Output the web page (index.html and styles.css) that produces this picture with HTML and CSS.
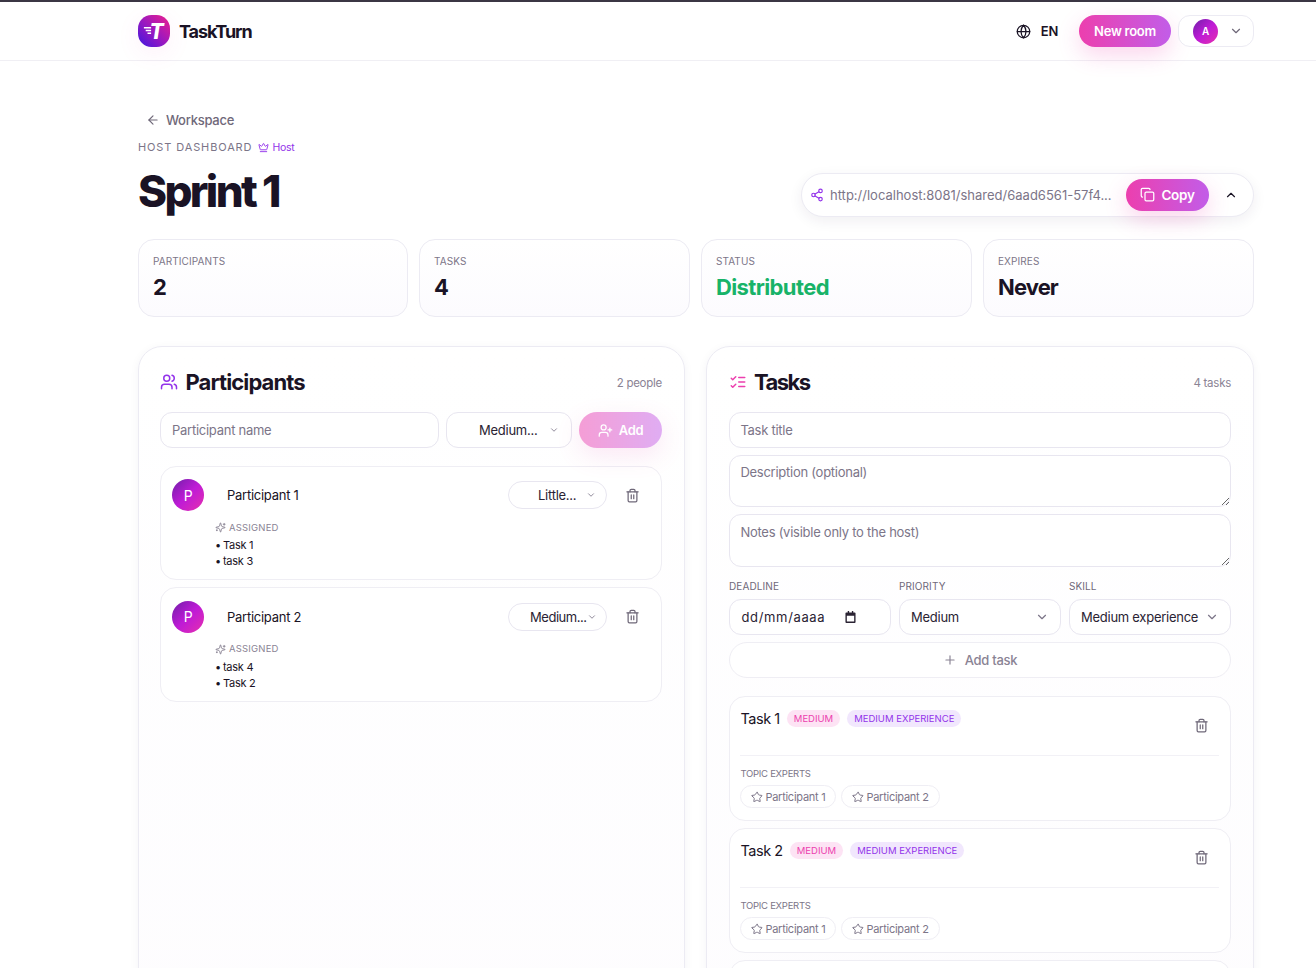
FILE: index.html
```html
<!DOCTYPE html>
<html lang="en">
<head>
    <meta charset="UTF-8">
    <meta name="viewport" content="width=device-width, initial-scale=1.0">
    <title>TaskTurn - Sprint 1</title>
    <link rel="stylesheet" href="styles.css">
</head>
<body>
    <!-- Icon sprite -->
    <svg class="sprite" xmlns="http://www.w3.org/2000/svg">
        <symbol id="i-globe" viewBox="0 0 24 24"><circle cx="12" cy="12" r="10"/><path d="M12 2a14.5 14.5 0 0 0 0 20 14.5 14.5 0 0 0 0-20"/><path d="M2 12h20"/></symbol>
        <symbol id="i-down" viewBox="0 0 24 24"><path d="m6 9 6 6 6-6"/></symbol>
        <symbol id="i-up" viewBox="0 0 24 24"><path d="m18 15-6-6-6 6"/></symbol>
        <symbol id="i-left" viewBox="0 0 24 24"><path d="m12 19-7-7 7-7"/><path d="M19 12H5"/></symbol>
        <symbol id="i-crown" viewBox="0 0 24 24"><path d="M11.562 3.266a.5.5 0 0 1 .876 0L15.39 8.87a1 1 0 0 0 1.516.294L21.183 5.5a.5.5 0 0 1 .798.519l-2.834 10.246a1 1 0 0 1-.956.734H5.81a1 1 0 0 1-.957-.734L2.02 6.02a.5.5 0 0 1 .798-.519l4.276 3.664a1 1 0 0 0 1.516-.294z"/><path d="M5 21h14"/></symbol>
        <symbol id="i-share" viewBox="0 0 24 24"><circle cx="18" cy="5" r="3"/><circle cx="6" cy="12" r="3"/><circle cx="18" cy="19" r="3"/><path d="m8.59 13.51 6.83 3.98"/><path d="m15.41 6.51-6.82 3.98"/></symbol>
        <symbol id="i-copy" viewBox="0 0 24 24"><rect x="8" y="8" width="14" height="14" rx="2"/><path d="M4 16c-1.1 0-2-.9-2-2V4c0-1.1.9-2 2-2h10c1.1 0 2 .9 2 2"/></symbol>
        <symbol id="i-users" viewBox="0 0 24 24"><path d="M16 21v-2a4 4 0 0 0-4-4H6a4 4 0 0 0-4 4v2"/><circle cx="9" cy="7" r="4"/><path d="M22 21v-2a4 4 0 0 0-3-3.87"/><path d="M16 3.13a4 4 0 0 1 0 7.75"/></symbol>
        <symbol id="i-user-plus" viewBox="0 0 24 24"><path d="M16 21v-2a4 4 0 0 0-4-4H6a4 4 0 0 0-4 4v2"/><circle cx="9" cy="7" r="4"/><path d="M19 8v6"/><path d="M22 11h-6"/></symbol>
        <symbol id="i-todo" viewBox="0 0 24 24"><path d="m3 17 2 2 4-4"/><path d="m3 7 2 2 4-4"/><path d="M13 6h8"/><path d="M13 12h8"/><path d="M13 18h8"/></symbol>
        <symbol id="i-trash" viewBox="0 0 24 24"><path d="M3 6h18"/><path d="M19 6v14c0 1-1 2-2 2H7c-1 0-2-1-2-2V6"/><path d="M8 6V4c0-1 1-2 2-2h4c1 0 2 1 2 2v2"/><path d="M10 11v6"/><path d="M14 11v6"/></symbol>
        <symbol id="i-sparkles" viewBox="0 0 24 24"><path d="M9.9 15.5a2 2 0 0 0-1.4-1.4l-6.1-1.6a.5.5 0 0 1 0-1l6.1-1.6a2 2 0 0 0 1.4-1.4l1.6-6.1a.5.5 0 0 1 1 0l1.6 6.1a2 2 0 0 0 1.4 1.4l6.1 1.6a.5.5 0 0 1 0 1l-6.1 1.6a2 2 0 0 0-1.4 1.4l-1.6 6.1a.5.5 0 0 1-1 0z"/><path d="M20 3v4"/><path d="M22 5h-4"/><path d="M4 17v2"/><path d="M5 18H3"/></symbol>
        <symbol id="i-star" viewBox="0 0 24 24"><path d="M11.5 2.3a.5.5 0 0 1 1 0l2.3 4.7a2 2 0 0 0 1.6 1.1l5.2.8a.5.5 0 0 1 .3.9l-3.8 3.7a2 2 0 0 0-.6 1.9l.9 5.2a.5.5 0 0 1-.8.6l-4.6-2.5a2 2 0 0 0-2 0l-4.6 2.5a.5.5 0 0 1-.8-.6l.9-5.2a2 2 0 0 0-.6-1.9L1.6 9.8a.5.5 0 0 1 .3-.9l5.2-.8a2 2 0 0 0 1.6-1.1z"/></symbol>
        <symbol id="i-plus" viewBox="0 0 24 24"><path d="M5 12h14"/><path d="M12 5v14"/></symbol>
    </svg>

    <!-- Header -->
    <header class="topbar">
        <div class="topbar-inner">
            <a class="brand" href="#">
                <span class="brand-mark">
                    <svg class="brand-lines" viewBox="0 0 10 10"><path d="M1 2h8M3 5h6M5 8h4"/></svg>
                    <span class="brand-t">T</span>
                </span>
                <span class="brand-name">TaskTurn</span>
            </a>
            <div class="topbar-actions">
                <button class="lang"><svg class="icon icon-15"><use href="#i-globe"/></svg>EN</button>
                <button class="btn-grad btn-new">New room</button>
                <button class="account">
                    <span class="avatar avatar-small">A</span>
                    <svg class="icon icon-14"><use href="#i-down"/></svg>
                </button>
            </div>
        </div>
    </header>

    <main class="page">
        <a class="back" href="#"><svg class="icon icon-14"><use href="#i-left"/></svg>Workspace</a>
        <div class="eyebrow">
            <span class="eyebrow-text">HOST DASHBOARD</span>
            <span class="host-tag"><svg class="icon icon-11"><use href="#i-crown"/></svg>Host</span>
        </div>

        <div class="title-row">
            <h1>Sprint 1</h1>
            <div class="share">
                <svg class="icon icon-14 share-icon"><use href="#i-share"/></svg>
                <span class="share-url">http://localhost:8081/shared/6aad6561-57f4...</span>
                <button class="btn-grad btn-copy"><svg class="icon icon-15"><use href="#i-copy"/></svg>Copy</button>
                <svg class="icon icon-14 share-toggle"><use href="#i-up"/></svg>
            </div>
        </div>

        <!-- Stats -->
        <section class="stats">
            <div class="stat"><p class="stat-label">PARTICIPANTS</p><p class="stat-value">2</p></div>
            <div class="stat"><p class="stat-label">TASKS</p><p class="stat-value">4</p></div>
            <div class="stat"><p class="stat-label">STATUS</p><p class="stat-value stat-green">Distributed</p></div>
            <div class="stat"><p class="stat-label">EXPIRES</p><p class="stat-value">Never</p></div>
        </section>

        <div class="columns">
            <!-- Participants -->
            <section class="panel panel-people">
                <div class="panel-head">
                    <h2><svg class="icon icon-18 purple"><use href="#i-users"/></svg>Participants</h2>
                    <span class="panel-count">2 people</span>
                </div>
                <div class="add-row">
                    <input class="field add-name" placeholder="Participant name">
                    <div class="field picker add-skill"><span>Medium...</span><svg class="icon icon-10"><use href="#i-down"/></svg></div>
                    <button class="btn-grad btn-add"><svg class="icon icon-15"><use href="#i-user-plus"/></svg>Add</button>
                </div>

                <div class="person">
                    <div class="person-top">
                        <span class="avatar">P</span>
                        <span class="person-name">Participant 1</span>
                        <div class="pill-select pill-little"><span>Little...</span><svg class="icon icon-10"><use href="#i-down"/></svg></div>
                        <svg class="icon icon-15 trash"><use href="#i-trash"/></svg>
                    </div>
                    <div class="assigned">
                        <p class="assigned-label"><svg class="icon icon-11"><use href="#i-sparkles"/></svg>ASSIGNED</p>
                        <ul>
                            <li>Task 1</li>
                            <li>task 3</li>
                        </ul>
                    </div>
                </div>

                <div class="person">
                    <div class="person-top">
                        <span class="avatar">P</span>
                        <span class="person-name">Participant 2</span>
                        <div class="pill-select pill-medium"><span>Medium...</span><svg class="icon icon-10"><use href="#i-down"/></svg></div>
                        <svg class="icon icon-15 trash"><use href="#i-trash"/></svg>
                    </div>
                    <div class="assigned">
                        <p class="assigned-label"><svg class="icon icon-11"><use href="#i-sparkles"/></svg>ASSIGNED</p>
                        <ul>
                            <li>task 4</li>
                            <li>Task 2</li>
                        </ul>
                    </div>
                </div>
            </section>

            <!-- Tasks -->
            <section class="panel">
                <div class="panel-head">
                    <h2 class="tasks-title"><svg class="icon icon-18 pink"><use href="#i-todo"/></svg>Tasks</h2>
                    <span class="panel-count">4 tasks</span>
                </div>
                <form class="task-form">
                    <input class="field" placeholder="Task title">
                    <textarea class="field area" placeholder="Description (optional)"></textarea>
                    <textarea class="field area area-notes" placeholder="Notes (visible only to the host)"></textarea>
                    <div class="form-grid">
                        <div>
                            <p class="form-label">DEADLINE</p>
                            <div class="field date"><span>dd/mm/aaaa</span>
                                <svg class="cal" viewBox="0 0 12 13"><path d="M3 0h1.500v1.500h3V0H9v1.500h1.500A1 1 0 0 1 11.500 2.500V12a1 1 0 0 1-1 1h-9a1 1 0 0 1-1-1V2.500a1 1 0 0 1 1-1H3zM2 5v6.500h8V5z"/></svg>
                            </div>
                        </div>
                        <div>
                            <p class="form-label">PRIORITY</p>
                            <div class="field picker left"><span>Medium</span><svg class="icon icon-14"><use href="#i-down"/></svg></div>
                        </div>
                        <div>
                            <p class="form-label">SKILL</p>
                            <div class="field picker left"><span>Medium experience</span><svg class="icon icon-14"><use href="#i-down"/></svg></div>
                        </div>
                    </div>
                    <button type="button" class="add-task"><svg class="icon icon-14"><use href="#i-plus"/></svg>Add task</button>
                </form>

                <div class="task-list">
                    <article class="task">
                        <div class="task-top">
                            <h3>Task 1</h3>
                            <span class="tag tag-pink">MEDIUM</span>
                            <span class="tag tag-purple">MEDIUM EXPERIENCE</span>
                            <svg class="icon icon-15 trash task-trash"><use href="#i-trash"/></svg>
                        </div>
                        <p class="experts-label">TOPIC EXPERTS</p>
                        <div class="chips">
                            <span class="chip"><svg class="icon icon-12"><use href="#i-star"/></svg>Participant 1</span>
                            <span class="chip"><svg class="icon icon-12"><use href="#i-star"/></svg>Participant 2</span>
                        </div>
                    </article>
                    <article class="task">
                        <div class="task-top">
                            <h3>Task 2</h3>
                            <span class="tag tag-pink">MEDIUM</span>
                            <span class="tag tag-purple">MEDIUM EXPERIENCE</span>
                            <svg class="icon icon-15 trash task-trash"><use href="#i-trash"/></svg>
                        </div>
                        <p class="experts-label">TOPIC EXPERTS</p>
                        <div class="chips">
                            <span class="chip"><svg class="icon icon-12"><use href="#i-star"/></svg>Participant 1</span>
                            <span class="chip"><svg class="icon icon-12"><use href="#i-star"/></svg>Participant 2</span>
                        </div>
                    </article>
                    <article class="task"></article>
                </div>
            </section>
        </div>
    </main>
</body>
</html>
```

FILE: styles.css
```css
/* Base */
* {
    box-sizing: border-box;
}

html, body {
    height: 100%;
    overflow: hidden;
}

body {
    margin: 0;
    background-color: #fff;
    color: #1a1325;
    font-family: Inter, "Noto Sans", sans-serif;
    font-size: 13px;
    letter-spacing: -0.02em;
}

button, input, textarea {
    font-family: inherit;
    letter-spacing: inherit;
}

button {
    cursor: pointer;
}

a {
    text-decoration: none;
}

p, h1, h2, h3, ul {
    margin: 0;
    padding: 0;
}

.sprite {
    display: none;
}

/* Icons */
.icon {
    fill: none;
    stroke: currentColor;
    stroke-width: 2;
    stroke-linecap: round;
    stroke-linejoin: round;
    flex-shrink: 0;
}

.icon-10 { width: 10px; height: 10px; }
.icon-11 { width: 11px; height: 11px; }
.icon-12 { width: 12px; height: 12px; }
.icon-14 { width: 14px; height: 14px; }
.icon-15 { width: 15px; height: 15px; }
.icon-18 { width: 18px; height: 18px; }

.purple { color: #9333ea; }
.pink { color: #ec3fae; }

/* Header */
.topbar {
    height: 61px;
    border-top: 2px solid #3b3644;
    border-bottom: 1px solid #f0eff4;
    background-color: #fff;
}

.topbar-inner {
    width: 1116px;
    height: 58px;
    margin-left: 138px;
    display: flex;
    align-items: center;
    justify-content: space-between;
}

.brand {
    display: flex;
    align-items: center;
    gap: 9px;
    color: #1a1325;
}

.brand-mark {
    position: relative;
    width: 32px;
    height: 32px;
    border-radius: 42%;
    background: linear-gradient(45deg, #3d17e0 0%, #9a18c0 48%, #f01f8c 100%);
    box-shadow: 0 6px 24px rgba(236, 63, 174, 0.08);
    display: flex;
    align-items: center;
    justify-content: center;
}

.brand-t {
    margin-left: 5px;
    color: #fff;
    font-size: 21px;
    line-height: 1;
    font-weight: 800;
    font-style: italic;
}

.brand-lines {
    position: absolute;
    left: 5px;
    top: 11px;
    width: 9px;
    height: 9px;
    fill: none;
    stroke: #fff;
    stroke-width: 1.6;
}

.brand-name {
    font-size: 18px;
    font-weight: 700;
    letter-spacing: -0.06em;
}

.topbar-actions {
    display: flex;
    align-items: center;
}

.lang {
    display: flex;
    align-items: center;
    gap: 10px;
    padding: 0;
    margin-right: 21px;
    border: none;
    background: none;
    color: #1a1325;
    font-size: 13px;
    font-weight: 600;
}

.btn-grad {
    border: none;
    color: #fff;
    background: linear-gradient(90deg, #ec3fae, #c25de8);
    box-shadow: 0 8px 22px rgba(236, 63, 174, 0.22);
    font-weight: 600;
}

.btn-new {
    width: 92px;
    height: 32px;
    border-radius: 16px;
    padding: 0;
    font-size: 13px;
}

.account {
    width: 76px;
    height: 32px;
    margin-left: 7px;
    display: flex;
    align-items: center;
    gap: 11px;
    padding: 0 0 0 14px;
    border: 1px solid #ecebf3;
    border-radius: 12px;
    background-color: #fff;
    color: #6f6879;
}

.avatar {
    width: 32px;
    height: 32px;
    border-radius: 50%;
    background: linear-gradient(135deg, #6f1fa8, #bf1bd6 50%, #e62fae);
    color: #fff;
    font-size: 14px;
    display: flex;
    align-items: center;
    justify-content: center;
    flex-shrink: 0;
}

.avatar-small {
    width: 25px;
    height: 25px;
    font-size: 10px;
    font-weight: 600;
}

/* Page head */
.page {
    width: 1116px;
    margin-left: 138px;
    padding-top: 50px;
}

.back {
    display: flex;
    align-items: center;
    gap: 6px;
    height: 18px;
    padding-left: 8px;
    color: #6f6879;
    font-size: 13px;
    font-weight: 500;
}

.eyebrow {
    display: flex;
    align-items: center;
    gap: 6px;
    height: 16px;
    margin-top: 10px;
}

.eyebrow-text {
    color: #7c7588;
    font-size: 11px;
    letter-spacing: 0.08em;
}

.host-tag {
    display: flex;
    align-items: center;
    gap: 3px;
    color: #9333ea;
    font-size: 10.5px;
}

.title-row {
    display: flex;
    align-items: center;
    justify-content: space-between;
    margin-top: 4px;
    height: 60px;
}

h1 {
    margin-top: 3px;
    font-size: 44px;
    line-height: 60px;
    font-weight: 800;
    letter-spacing: -0.06em;
}

.share {
    width: 453px;
    height: 44px;
    margin-top: 11px;
    display: flex;
    align-items: center;
    padding-left: 8px;
    border: 1px solid #ecebf3;
    border-radius: 22px;
    background-color: #fff;
    box-shadow: 0 4px 14px rgba(40, 30, 70, 0.07);
}

.share-icon {
    color: #9333ea;
}

.share-url {
    margin-left: 6px;
    width: 288px;
    color: #7c7588;
    font-size: 13px;
    letter-spacing: 0;
    white-space: nowrap;
    overflow: hidden;
}

.btn-copy {
    width: 83px;
    height: 32px;
    margin-left: 8px;
    border-radius: 16px;
    display: flex;
    align-items: center;
    justify-content: center;
    gap: 6px;
    padding: 0;
    font-size: 13.5px;
}

.share-toggle {
    margin-left: 15px;
    color: #1a1325;
}

/* Stats */
.stats {
    display: grid;
    grid-template-columns: 270px 271px 271px 271px;
    gap: 11px;
    margin-top: 20px;
}

.stat {
    height: 78px;
    padding: 14px;
    border: 1px solid #ecebf3;
    border-radius: 16px;
    background: linear-gradient(#fff, #fcfbfe);
}

.stat-label {
    color: #7c7588;
    font-size: 10px;
    line-height: 14px;
    letter-spacing: 0.01em;
}

.stat-value {
    margin-top: 5px;
    font-size: 22px;
    line-height: 28px;
    font-weight: 700;
    letter-spacing: -0.04em;
}

.stat-green {
    color: #18b368;
    letter-spacing: -0.028em;
}

/* Panels */
.columns {
    display: grid;
    grid-template-columns: 547px 548px;
    gap: 21px;
    margin-top: 29px;
}

.panel {
    height: 800px;
    padding: 21px 22px;
    border: 1px solid #ecebf3;
    border-radius: 24px;
    background: linear-gradient(#fff, #fdfcfe);
    box-shadow: 0 2px 10px rgba(40, 30, 70, 0.05);
}

.panel-people {
    padding-left: 21px;
}

.panel-head {
    display: flex;
    align-items: center;
    justify-content: space-between;
    height: 28px;
}

h2 {
    display: flex;
    align-items: center;
    gap: 7.5px;
    font-size: 22px;
    font-weight: 700;
    letter-spacing: -0.04em;
}

.tasks-title {
    gap: 7px;
    letter-spacing: -0.07em;
}

.panel-count {
    margin-top: 2px;
    color: #8a8394;
    font-size: 11.5px;
}

/* Form fields */
.field {
    display: block;
    width: 100%;
    height: 36px;
    padding: 0 11px;
    border: 1px solid #e8e6f0;
    border-radius: 12px;
    background-color: #fff;
    color: #2a2333;
    font-size: 13px;
    outline: none;
}

.field::placeholder {
    color: #7c7588;
    opacity: 1;
}

.task-form > .field {
    padding-left: 10.4px;
}

.area {
    height: 52px;
    padding-top: 8px;
    resize: vertical;
}

.task-form > .area-notes {
    height: 53px;
    padding-top: 9px;
}

.picker {
    display: flex;
    align-items: center;
    justify-content: space-between;
    color: #2a2333;
}

.picker .icon {
    color: #7c7588;
}

.add-row {
    display: flex;
    gap: 7px;
    margin-top: 16px;
}

.add-name {
    width: 279px;
    flex-shrink: 0;
}

.add-skill {
    width: 126px;
    flex-shrink: 0;
    padding: 0 12px 0 32px;
}

.btn-add {
    width: 83px;
    height: 36px;
    flex-shrink: 0;
    border-radius: 18px;
    display: flex;
    align-items: center;
    justify-content: center;
    gap: 6px;
    padding: 0;
    font-size: 13px;
    opacity: 0.5;
}

/* Participant cards */
.person {
    margin-top: 7px;
    padding: 12.4px 11px 10px;
    border: 1px solid #efeef4;
    border-radius: 16px;
    background-color: #fff;
}

.add-row + .person {
    margin-top: 18px;
}

.person-top {
    display: flex;
    align-items: center;
}

.person-name {
    margin-left: 23px;
    flex: 1;
    font-size: 13px;
}

.pill-select {
    display: flex;
    align-items: center;
    justify-content: space-between;
    width: 99px;
    height: 28px;
    border: 1px solid #e8e6f0;
    border-radius: 14px;
    color: #2a2333;
    font-size: 13px;
}

.pill-select .icon {
    color: #7c7588;
}

.pill-little {
    padding: 0 10px 0 29px;
}

.pill-medium {
    padding: 0 11px 0 21px;
    letter-spacing: -0.035em;
}

.trash {
    color: #6f6879;
}

.person-top .trash {
    margin-left: 18px;
    margin-right: 10px;
}

.assigned {
    margin: 9.5px 0 0 43px;
}

.assigned-label {
    display: flex;
    align-items: center;
    gap: 3px;
    color: #8a8394;
    font-size: 9.5px;
    line-height: 14px;
    letter-spacing: 0.02em;
}

.assigned ul {
    margin-top: 2.5px;
    list-style: none;
}

.assigned li {
    font-size: 11px;
    line-height: 16px;
}

.assigned li::before {
    content: "\2022";
    margin-right: 2px;
}

/* Task form */
.task-form {
    display: flex;
    flex-direction: column;
    gap: 7px;
    margin-top: 16px;
}

.form-grid {
    display: grid;
    grid-template-columns: repeat(3, 1fr);
    gap: 8px;
    margin-top: 6px;
}

.form-label {
    margin-bottom: 6px;
    color: #6f6879;
    font-size: 10px;
    line-height: 13px;
    letter-spacing: 0.01em;
}

.date {
    display: flex;
    align-items: center;
    justify-content: space-between;
    padding: 0 34px 0 11.5px;
    letter-spacing: 0.05em;
}

.cal {
    width: 11px;
    height: 12px;
    fill: #2a2333;
}

.left {
    padding-right: 11px;
}

.add-task {
    display: flex;
    align-items: center;
    justify-content: center;
    gap: 8px;
    height: 36px;
    border: 1px solid #efeef4;
    border-radius: 18px;
    background-color: #fff;
    color: #8a8394;
    font-size: 13px;
    font-weight: 500;
}

/* Task cards */
.task-list {
    display: flex;
    flex-direction: column;
    gap: 7px;
    margin-top: 18px;
}

.task {
    height: 125px;
    padding: 11px 11px 11px 10.4px;
    border: 1px solid #efeef4;
    border-radius: 16px;
    background-color: #fff;
}

.task-top {
    position: relative;
    display: flex;
    align-items: center;
    gap: 7px;
    height: 48px;
    padding-bottom: 26px;
    border-bottom: 1px solid #f2f1f6;
}

h3 {
    font-size: 14.5px;
    font-weight: 400;
    letter-spacing: -0.03em;
}

.tag {
    height: 17px;
    padding: 0 7px;
    border-radius: 9px;
    font-size: 9.5px;
    line-height: 17px;
    letter-spacing: 0;
}

.tag-pink {
    background-color: #fde3f4;
    color: #ec3fae;
}

.tag-purple {
    background-color: #f1e7fd;
    color: #9333ea;
}

.task-trash {
    position: absolute;
    right: 10px;
    top: 10px;
}

.experts-label {
    margin-top: 11px;
    color: #7c7588;
    font-size: 9.5px;
    line-height: 13px;
}

.chips {
    display: flex;
    gap: 5px;
    margin-top: 5px;
}

.chip {
    display: flex;
    align-items: center;
    gap: 2.5px;
    height: 23px;
    padding: 0 10px 0 9.5px;
    border: 1px solid #efeef4;
    border-radius: 12px;
    color: #7c7588;
    font-size: 11px;
}
```
